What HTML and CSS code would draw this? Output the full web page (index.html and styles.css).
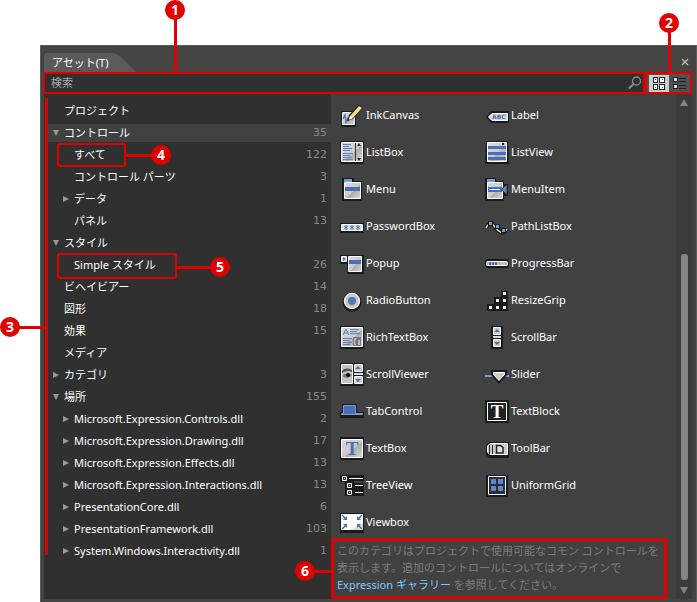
FILE: index.html
```html
<!DOCTYPE html>
<html lang="ja">
<head>
<meta charset="utf-8">
<title>アセット</title>
<link rel="stylesheet" href="styles.css">
</head>
<body>
<svg class="defs" aria-hidden="true">
  <defs>
    <linearGradient id="face" x1="0" y1="0" x2="1" y2="1">
      <stop offset="0" stop-color="#dcdcdc"/><stop offset=".55" stop-color="#cacaca"/><stop offset=".56" stop-color="#acacac"/><stop offset="1" stop-color="#d8d8d8"/>
    </linearGradient>
    <symbol id="open" viewBox="0 0 8 8"><path d="M1 1h6L4 7z" fill="#999"/></symbol>
    <symbol id="closed" viewBox="0 0 8 8"><path d="M1 1v6l6-3z" fill="#999"/></symbol>
  </defs>
</svg>
<main class="stage">
  <section class="panel">
    <header class="tabs">
      <h1 class="tab">アセット(T)</h1>
      <button class="close" aria-label="閉じる"><svg width="8" height="8" viewBox="0 0 8 8"><path d="M1 1l6 6M7 1l-6 6" stroke="#bbb" stroke-width="1.3"/></svg></button>
    </header>
    <div class="toolbar">
      <div class="search">
        <span class="callout callout-search">1</span>
        <input type="text" placeholder="検索" aria-label="検索">
        <svg width="14" height="14" viewBox="0 0 14 14"><circle cx="8.5" cy="5" r="4" fill="none" stroke="#8c8c8c" stroke-width="1.3"/><path d="M5.5 8L1 12.5" stroke="#8c8c8c" stroke-width="2"/></svg>
      </div>
      <div class="views">
        <span class="callout callout-views">2</span>
        <button class="view active" aria-label="グリッド"><svg width="20" height="17" viewBox="0 0 20 17"><path d="M4 2h5v6H4zM10 2h6v6h-6zM4 9h5v6H4zM10 9h6v6h-6z" fill="#222"/><path d="M5 3h3v4H5zM11 3h4v4h-4zM5 10h3v4H5zM11 10h4v4h-4z" fill="#fff"/><path d="M6 4h1v1H6zM13 4h1v1h-1zM6 12h1v1H6zM13 12h1v1h-1z" fill="#555"/></svg></button>
        <button class="view" aria-label="リスト"><svg width="20" height="17" viewBox="0 0 20 17"><path d="M3 2h5v5H3zM3 9h5v5H3z" fill="#222"/><path d="M4 3h3v3H4zM4 10h3v3H4z" fill="#ddd"/><path d="M9 3.5h7M9 6.5h7M9 10.5h7M9 13.5h7" stroke="#222"/></svg></button>
      </div>
    </div>
    <div class="content">
      <nav class="tree">
        <span class="callout callout-tree">3</span>
        <ul>
          <li><span class="arrow"></span><span class="name">プロジェクト</span></li>
          <li class="selected"><svg class="arrow"><use href="#open"/></svg><span class="name">コントロール</span><span class="count">35</span></li>
          <li class="sub"><span class="arrow"></span><span class="name">すべて</span><span class="count">122</span><span class="frame frame-all"><span class="callout callout-side">4</span></span></li>
          <li class="sub"><span class="arrow"></span><span class="name">コントロール パーツ</span><span class="count">3</span></li>
          <li class="sub"><svg class="arrow"><use href="#closed"/></svg><span class="name">データ</span><span class="count">1</span></li>
          <li class="sub"><span class="arrow"></span><span class="name">パネル</span><span class="count">13</span></li>
          <li><svg class="arrow"><use href="#open"/></svg><span class="name">スタイル</span></li>
          <li class="sub"><span class="arrow"></span><span class="name">Simple スタイル</span><span class="count">26</span><span class="frame frame-style"><span class="callout callout-side">5</span></span></li>
          <li><span class="arrow"></span><span class="name">ビヘイビアー</span><span class="count">14</span></li>
          <li><span class="arrow"></span><span class="name">図形</span><span class="count">18</span></li>
          <li><span class="arrow"></span><span class="name">効果</span><span class="count">15</span></li>
          <li><span class="arrow"></span><span class="name">メディア</span></li>
          <li><svg class="arrow"><use href="#closed"/></svg><span class="name">カテゴリ</span><span class="count">3</span></li>
          <li><svg class="arrow"><use href="#open"/></svg><span class="name">場所</span><span class="count">155</span></li>
          <li class="sub"><svg class="arrow"><use href="#closed"/></svg><span class="name">Microsoft.Expression.Controls.dll</span><span class="count">2</span></li>
          <li class="sub"><svg class="arrow"><use href="#closed"/></svg><span class="name">Microsoft.Expression.Drawing.dll</span><span class="count">17</span></li>
          <li class="sub"><svg class="arrow"><use href="#closed"/></svg><span class="name">Microsoft.Expression.Effects.dll</span><span class="count">13</span></li>
          <li class="sub"><svg class="arrow"><use href="#closed"/></svg><span class="name">Microsoft.Expression.Interactions.dll</span><span class="count">13</span></li>
          <li class="sub"><svg class="arrow"><use href="#closed"/></svg><span class="name">PresentationCore.dll</span><span class="count">6</span></li>
          <li class="sub"><svg class="arrow"><use href="#closed"/></svg><span class="name">PresentationFramework.dll</span><span class="count">103</span></li>
          <li class="sub"><svg class="arrow"><use href="#closed"/></svg><span class="name">System.Windows.Interactivity.dll</span><span class="count">1</span></li>
        </ul>
      </nav>
      <div class="assets">
        <ul class="grid">
          <li><svg class="icon" viewBox="0 0 24 24"><path d="M1 8h15v16H1z" fill="#191b1a"/><path d="M2.5 9.5h12v12h-12z" fill="url(#face)" stroke="#eee"/><path d="M3 16l2-4 1 7 2-4 1 3" fill="none" stroke="#4a6fb8" stroke-width="1.3"/><path d="M7 18l2-6 9-10h2l3 3-10 11z" fill="#222"/><path d="M9 16l1-3 9-10 3 2-9 10z" fill="#f3dc8c"/><path d="M10 13l3 2-4 2z" fill="#fff"/></svg>InkCanvas</li>
          <li><svg class="icon" viewBox="0 0 24 24"><path d="M1 14l5-6h18v12H6z" fill="#191b1a"/><path d="M3.500 14l3.500-3.500h15.500v7H7z" fill="#d8d8d8" stroke="#fff"/><text x="7" y="16" class="abc">ABC</text></svg>Label</li>
          <li><svg class="icon" viewBox="0 0 24 24"><path d="M0 1h24v23H0z" fill="#191b1a"/><path d="M1.500 2.500h21v19h-21z" fill="url(#face)" stroke="#fff"/><path d="M15.500 3v18" stroke="#333"/><path d="M3 4.500h8M3 6.500h6M3 8.500h9M3 10.500h7M3 13.500h10M3 15.500h7M3 17.500h9M3 19.500h10" stroke="#5d80c4"/><path d="M17 6h4l-2-3zM17 18h4l-2 3z" fill="#222"/></svg>ListBox</li>
          <li><svg class="icon" viewBox="0 0 24 24"><path d="M1 1h22l1 23H0z" fill="#191b1a"/><path d="M2.500 2.500h19v19h-19z" fill="url(#face)" stroke="#fff"/><path d="M3 6h18v3H3zM3 12h18v3H3zM3 17h18v3H3z" fill="#4a6fb8"/><path d="M17 3h2v2h-2z" fill="#111"/></svg>ListView</li>
          <li><svg class="icon" viewBox="0 0 24 24"><path d="M3 1h11v3h8v20H2V1z" fill="#191b1a"/><path d="M4 2h8v3H4z" fill="#7d9bd6"/><path d="M4.500 5.500h16v16h-16z" fill="url(#face)" stroke="#fff"/><path d="M5 10h15v4H5z" fill="#4a6fb8"/></svg>Menu</li>
          <li><svg class="icon" viewBox="0 0 24 24"><path d="M1 1h10v3h8v3h4v12h-4v5H0V1z" fill="#191b1a"/><path d="M2 2h8v3H2z" fill="#7d9bd6"/><path d="M2.500 5.500h15v16h-15z" fill="url(#face)" stroke="#fff"/><path d="M3 10h14v5H3z" fill="#4a6fb8"/><path d="M4 12.500h11" stroke="#fff"/><path d="M16 12.500l6-5v10z" fill="#5f85cf" stroke="#333"/></svg>MenuItem</li>
          <li><svg class="icon" viewBox="0 0 24 24"><path d="M0 9h24v10H0z" fill="#191b1a"/><path d="M1.500 10.500h21v6h-21z" fill="#ddd" stroke="#fff"/><path d="M6 11v5M4 12l4 3M8 12l-4 3M12 11v5M10 12l4 3M14 12l-4 3M18 11v5M16 12l4 3M20 12l-4 3" stroke="#4a6fb8" stroke-width=".9"/></svg>PasswordBox</li>
          <li><svg class="icon" viewBox="0 0 24 24"><path d="M1 14c2-5 6-5 9-1s8 9 12 2" fill="none" stroke="#191b1a" stroke-width="4"/><path d="M1 14c2-5 6-5 9-1s8 9 12 2" fill="none" stroke="#ddd" stroke-width="1.500"/><path d="M3 7h5v5H3zM10 10h5v5h-5zM16 14h5v5h-5z" fill="#191b1a"/><path d="M4 8h3v3H4zM11 11h3v3h-3zM17 15h3v3h-3z" fill="#7d9bd6"/></svg>PathListBox</li>
          <li><svg class="icon" viewBox="0 0 24 24"><path d="M0 4h24v19H7V13H0z" fill="#191b1a"/><path d="M1.500 5.500h5v5h-5z" fill="#ddd" stroke="#fff"/><path d="M3 6v4l3-2z" fill="#4a6fb8"/><path d="M8.500 5.500h13v15h-13z" fill="url(#face)" stroke="#fff"/><path d="M9 9h12v4H9z" fill="#4a6fb8"/></svg>Popup</li>
          <li><svg class="icon" viewBox="0 0 24 24"><rect y="8" width="24" height="9" rx="3" fill="#191b1a"/><rect x="1.5" y="10.5" width="21" height="4" rx="1" fill="#bbb" stroke="#fff"/><path d="M4 11h2v3H4zM7 11h2v3H7zM10 11h2v3h-2z" fill="#4a6fb8"/></svg>ProgressBar</li>
          <li><svg class="icon" viewBox="0 0 24 24"><circle cx="12" cy="14" r="9.500" fill="#191b1a"/><circle cx="12" cy="13" r="7.500" fill="#c6c6c6" stroke="#eee" stroke-width="1.500"/><circle cx="12" cy="13" r="4" fill="#4f76c1"/></svg>RadioButton</li>
          <li><svg class="icon" viewBox="0 0 24 24"><path d="M16 3h7v20H2v-7h7V9h7z" fill="#191b1a"/><path d="M18 4h3v3h-3zM11 11h3v3h-3zM18 11h3v3h-3zM4 18h3v3H4zM11 18h3v3h-3zM18 18h3v3h-3z" fill="#eee"/></svg>ResizeGrip</li>
          <li><svg class="icon" viewBox="0 0 24 24"><path d="M0 1h24v23H0z" fill="#191b1a"/><path d="M1.500 2.500h21v19h-21z" fill="url(#face)" stroke="#fff"/><path d="M3 10l3-6 3 6M4 8h4M10 4.500h9M10 6.500h7M10 8.500h10M3 13.500h9M3 15.500h7M3 17.500h9M3 19.500h7" fill="none" stroke="#5d80c4"/><path d="M13 12h8v9h-8z" fill="#777"/><path d="M14 13h3l-2 3 1 4h-2zM18 15h2v5h-2z" fill="#bbb"/></svg>RichTextBox</li>
          <li><svg class="icon" viewBox="0 0 24 24"><rect x="6" y="1" width="12" height="23" rx="1" fill="#191b1a"/><path d="M8.500 2.500h7v7h-7zM8.500 14.500h7v7h-7z" fill="#ccc" stroke="#fff"/><path d="M8 11h8v2H8z" fill="#ddd"/><path d="M9 7l3-3 3 3zM9 17l3 3 3-3z" fill="#4a6fb8"/></svg>ScrollBar</li>
          <li><svg class="icon" viewBox="0 0 24 24"><path d="M0 1h24v23H0z" fill="#191b1a"/><path d="M1.500 2.500h11v19h-11z" fill="#c4c4c4" stroke="#fff"/><path d="M2 9c3-3 6-3 10-1v2C9 8 5 9 2 11z" fill="#555"/><path d="M2 14c3-3 7-3 10-1-2 3-6 4-10 1z" fill="#777"/><circle cx="8" cy="13" r="2" fill="#111"/><path d="M14.500 2.500h8v7h-8zM14.500 14.500h8v7h-8z" fill="#ccc" stroke="#fff"/><path d="M14 11h9v2h-9z" fill="#ddd"/><path d="M15 7l3-3 3 3zM15 17l3 3 3-3z" fill="#4a6fb8"/></svg>ScrollViewer</li>
          <li><svg class="icon" viewBox="0 0 24 24"><path d="M0 14h24" stroke="#7d9bd6" stroke-width="2"/><path d="M6 8h16v5l-8 9-8-9z" fill="#191b1a"/><path d="M8.500 10.500h11v2L14 18.500l-5.500-6z" fill="#ccc" stroke="#fff"/></svg>Slider</li>
          <li><svg class="icon" viewBox="0 0 24 24"><path d="M2 5h15v8h7v6H0v-6h2z" fill="#191b1a"/><path d="M3.500 6.500h12v8h7v1h-21v-1h2z" fill="#4a6fb8" stroke="#7d9bd6"/></svg>TabControl</li>
          <li><svg class="icon" viewBox="0 0 24 24"><path d="M0 1h24v23H0z" fill="#191b1a"/><path d="M2.500 3.500h19v18h-19z" fill="#222" stroke="#fff"/><text x="12" y="19" class="tee light">T</text></svg>TextBlock</li>
          <li><svg class="icon" viewBox="0 0 24 24"><path d="M0 1h24v23H0z" fill="#191b1a"/><path d="M1.500 3.500h21v18h-21z" fill="url(#face)" stroke="#fff"/><text x="12" y="19" class="tee">T</text></svg>TextBox</li>
          <li><svg class="icon" viewBox="0 0 24 24"><path d="M4 6h20v16H4l-3-3V9z" fill="#191b1a"/><path d="M5 7.500h17.500v11H5L2.500 16v-6z" fill="#ccc" stroke="#fff"/><path d="M4.500 9v9M7.500 9v9" stroke="#222"/><path d="M11.500 9.500h4l2.500 2v5.500h-6.500z" fill="#ddd" stroke="#222" stroke-width="1.500"/></svg>ToolBar</li>
          <li><svg class="icon" viewBox="0 0 24 24"><path d="M0 2h24v6H14v2h10v13H5V9H0z" fill="#191b1a"/><path d="M2.500 3.500h4v4h-4zM7.500 10.500h4v4h-4zM7.500 17.500h4v4h-4z" fill="#333" stroke="#fff"/><path d="M9 5.500h14M15 12.500h8M15 19.500h8M4 5.500h1M9 12.500h1M9 19.500h1" stroke="#fff"/></svg>TreeView</li>
          <li><svg class="icon" viewBox="0 0 24 24"><path d="M1 2h22v22H1z" fill="#191b1a"/><path d="M3.500 3.500h17v18h-17z" fill="#2a2d33" stroke="#fff"/><path d="M6 6h5v5H6zM13 6h5v5h-5zM6 13h5v5H6zM13 13h5v5h-5z" fill="#5f85cf"/></svg>UniformGrid</li>
          <li><svg class="icon" viewBox="0 0 24 24"><path d="M0 3h24v20H0z" fill="#191b1a"/><path d="M1 4h22v16H1z" fill="#fff"/><path d="M10 20l13-7v7z" fill="#ddd"/><path d="M2 5l4 4M22 5l-4 4M2 19l4-4M22 19l-4-4" stroke="#4a6fb8" stroke-width="1.500"/><path d="M7 6v4H3zM17 6v4h4zM7 18v-4H3zM17 18v-4h4z" fill="#4a6fb8"/></svg>Viewbox</li>
        </ul>
        <div class="note">
          <span class="callout callout-note">6</span>
          <p>このカテゴリはプロジェクトで使用可能なコモン コントロールを<br>表示します。追加のコントロールについてはオンラインで<br><a href="#gallery">Expression ギャラリー</a> を参照してください。</p>
        </div>
      </div>
      <div class="scrollbar">
        <svg width="8" height="8" viewBox="0 0 8 8"><path d="M0 7h8L4 0z" fill="#858585"/></svg>
        <span class="track"><span class="thumb"></span></span>
        <svg width="8" height="8" viewBox="0 0 8 8"><path d="M0 1h8L4 8z" fill="#858585"/></svg>
      </div>
    </div>
  </section>
</main>
</body>
</html>
```
FILE: styles.css
```css
* { box-sizing: border-box; }

:root { --red: #e00000; }

body {
  margin: 0;
  background: #fff;
  color: #fff;
  font: 11px/22px "Noto Sans", "Noto Sans CJK JP", sans-serif;
}

ul, p, h1 { margin: 0; padding: 0; list-style: none; }
button { margin: 0; padding: 0; border: 0; background: none; display: block; }
svg { display: block; flex: none; }
.defs { position: absolute; width: 0; height: 0; }

.stage {
  min-height: 100vh;
  padding: 45px 0 0 40px;
  display: flex;
  flex-direction: column;
}

.panel {
  flex: 1;
  display: flex;
  flex-direction: column;
  padding: 0 4px 3px 2px;
  border: 1px solid #5b5b5b;
  background: #444542;
}

.tabs {
  display: flex;
  justify-content: space-between;
  align-items: flex-end;
  height: 26px;
}

.tab {
  width: 92px;
  height: 19px;
  margin-left: 1px;
  padding-left: 8px;
  font-size: 11px;
  font-weight: 400;
  line-height: 19px;
  background: #5a5a5a;
  border-top-left-radius: 3px;
  clip-path: polygon(0 0, 70px 0, 76px 3px, 92px 100%, 0 100%);
}

.close { padding: 6px 3px; }

.toolbar { display: flex; height: 22px; }

.search, .views {
  position: relative;
  display: flex;
  align-items: center;
  border: 2px solid var(--red);
  border-radius: 2px;
}

.search { flex: 1; padding-right: 1px; background: #303030; }

.search input {
  flex: 1;
  min-width: 0;
  height: 18px;
  padding: 0 6px;
  border: 0;
  outline: 0;
  background: none;
  color: #fff;
  font: inherit;
}

.search input::placeholder { color: #aaa; opacity: 1; }

.views { width: 47px; padding-left: 2px; gap: 1px; background: #505050; }
.view { width: 20px; height: 17px; }
.view.active { background: #ccc; }

.content { flex: 1; display: flex; margin-left: 1px; }

.tree {
  position: relative;
  width: 287px;
  flex: none;
  padding: 6px 0 0 4px;
  background: #303030;
}

.tree li {
  position: relative;
  display: flex;
  align-items: center;
  height: 22px;
  padding: 0 4px;
}

.tree .sub { padding-left: 14px; }
.tree .selected { height: 18px; margin: 2px 0; background: #414141; }
.arrow { width: 8px; height: 8px; margin-right: 4px; }
.name { flex: 1; white-space: nowrap; }
.count { color: #8a8a8a; font-family: "DejaVu Sans", sans-serif; }

.assets { flex: 1; min-width: 0; background: #414141; }

.grid {
  display: grid;
  grid-template-columns: 145px 1fr;
  gap: 13px 0;
  padding: 9px 0 0 9px;
}

.grid li { display: flex; align-items: center; gap: 2px; height: 24px; }
.icon { width: 24px; height: 24px; }
.abc { font: bold 6px "DejaVu Sans", sans-serif; fill: #4a6fb8; }
.tee { font: bold 19px "Liberation Serif", serif; fill: #4a6fb8; text-anchor: middle; }
.tee.light { fill: #fff; }

.note {
  position: relative;
  margin: 4px 9px 0 0;
  padding: 1px 0 3px 3px;
  border: 3px solid var(--red);
  color: #7c7c7c;
  line-height: 17px;
}

.note p { white-space: nowrap; }
.note a { color: #7cccff; text-decoration: none; }

.scrollbar {
  width: 16px;
  flex: none;
  display: flex;
  flex-direction: column;
  align-items: center;
  padding: 5px 0;
  background: #3a3c39;
}

.track { flex: 1; width: 7px; display: flex; flex-direction: column; justify-content: flex-end; padding-bottom: 6px; }
.thumb { height: 69%; border-radius: 3px; background: #858385; }

/* Numbered markers and their leader lines */
.callout {
  position: absolute;
  z-index: 1;
  width: 20px;
  height: 20px;
  border-radius: 50%;
  background: var(--red);
  color: #fff;
  font: bold 14px/20px "Open Sans", sans-serif;
  text-align: center;
}

.callout::before { content: ""; position: absolute; background: var(--red); }
.callout-search { left: 120px; top: -74px; }
.callout-views { left: 12px; top: -61px; }
.callout-search::before, .callout-views::before { left: 9px; top: 19px; width: 3px; height: 54px; }
.callout-views::before { height: 41px; }
.callout-tree { left: -44px; top: 223px; }
.callout-tree::before { left: 19px; top: 9px; width: 26px; height: 3px; }
.tree::before {
  content: "";
  position: absolute;
  left: 1px;
  top: 4px;
  width: 3px;
  height: 457px;
  background: var(--red);
}

.frame {
  position: absolute;
  left: 9px;
  top: -1px;
  height: 24px;
  border: 2px solid var(--red);
  border-radius: 2px;
}

.frame-all { width: 69px; }
.frame-style { width: 120px; height: 26px; }
.callout-side { right: -47px; top: 0; }
.frame-style .callout-side { right: -55px; top: 2px; }
.callout-side::before { right: 19px; top: 9px; width: 27px; height: 3px; }
.frame-style .callout-side::before { width: 35px; }
.callout-note { left: -39px; top: 20px; }
.callout-note::before { left: 19px; top: 9px; width: 18px; height: 3px; }
```
